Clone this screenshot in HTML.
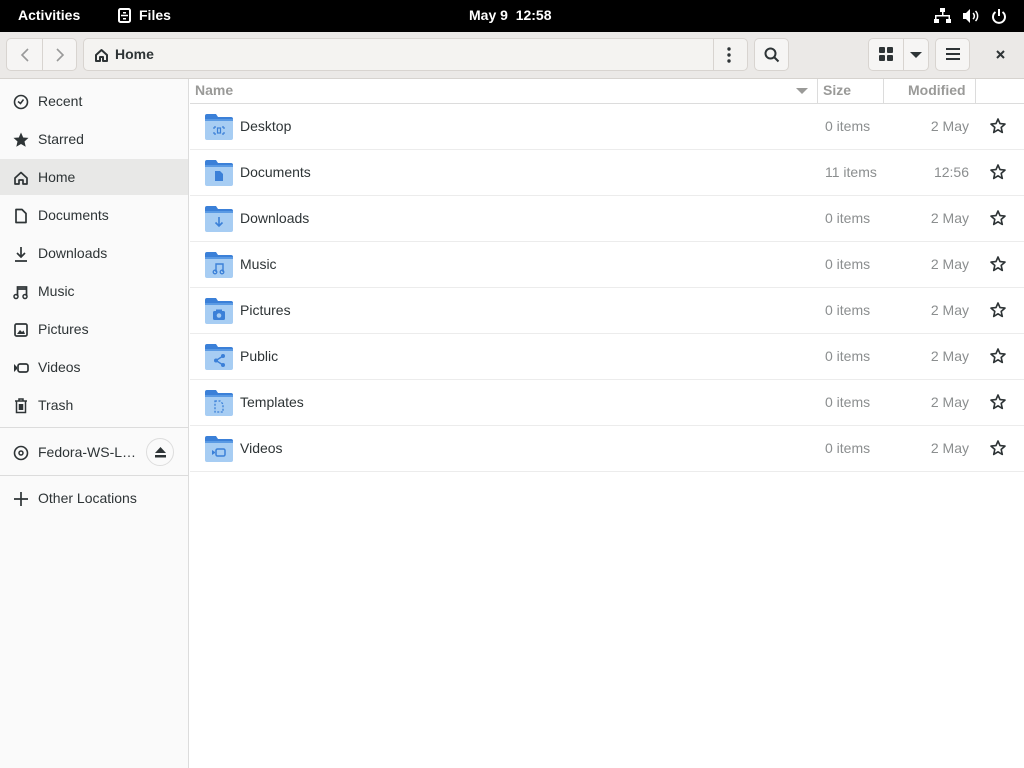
<!DOCTYPE html>
<html><head><meta charset="utf-8"><style>
*{margin:0;padding:0;box-sizing:border-box}
body{width:1024px;height:768px;overflow:hidden;font-family:"Liberation Sans","DejaVu Sans",sans-serif;background:#fff;position:relative;color:#2e3436}
.abs{position:absolute}
#top{left:0;top:0;width:1024px;height:32px;background:#000;color:#fff;font-size:14px;font-weight:bold}
#hb{left:0;top:32px;width:1024px;height:47px;background:#ebe9e7;border-bottom:1px solid #d6d3cf}
.btn{position:absolute;top:6px;height:33px;background:#f6f5f4;border:1px solid #d8d4d0;border-radius:5px}
#side{left:0;top:79px;width:189px;height:689px;background:#fafafa;border-right:1px solid #dcdcdc}
.si{position:absolute;left:0;width:188px;height:36px;font-size:14px;color:#2e3436}
.si span{position:absolute;left:38px;top:10px}
.si svg{position:absolute;left:13px;top:11px}
.hdr{font-size:14px;font-weight:bold;color:#9a9a98}
.row{position:absolute;left:190px;width:834px;height:46px;border-bottom:1px solid #ececec;font-size:14px}
.row .n{position:absolute;left:50px;top:14px;color:#2e3436}
.row .s{position:absolute;left:635px;top:14px;color:#8b8e8f}
.row .m{position:absolute;right:55px;top:14px;color:#8b8e8f}
.row .st{position:absolute;left:800px;top:14px}
.row .f{position:absolute;left:15px;top:10px}
</style></head><body>
<div id="top" class="abs">
<div class="abs" style="left:18px;top:7px">Activities</div>
<svg class="abs" style="left:118px;top:8px" width="13" height="15"><rect x="1" y="1" width="11" height="13" rx="1.5" fill="none" stroke="#fff" stroke-width="2"/><line x1="3" y1="7.5" x2="10" y2="7.5" stroke="#fff" stroke-width="1.5"/><rect x="5" y="4" width="3" height="1.5" fill="#fff"/><rect x="5" y="10" width="3" height="1.5" fill="#fff"/></svg>
<div class="abs" style="left:139px;top:7px">Files</div>
<div class="abs" style="left:469px;top:7px">May 9&nbsp; 12:58</div>
<svg class="abs" style="left:934px;top:8px" width="18" height="16" fill="#fff"><rect x="6" y="0" width="5" height="4"/><rect x="8" y="4" width="1.5" height="4"/><rect x="1" y="7" width="15" height="1.5"/><rect x="1" y="7" width="1.5" height="4"/><rect x="14.5" y="7" width="1.5" height="4"/><rect x="0" y="11" width="5" height="4"/><rect x="12" y="11" width="5" height="4"/></svg>
<svg class="abs" style="left:962px;top:8px" width="18" height="16"><path d="M1 5h3l4-4v14l-4-4H1z" fill="#fff"/><path d="M11 5a4 4 0 0 1 0 6M13.5 3a7 7 0 0 1 0 10" stroke="#fff" stroke-width="1.5" fill="none"/></svg>
<svg class="abs" style="left:991px;top:8px" width="16" height="16"><path d="M4.5 4a6 6 0 1 0 7 0" stroke="#fff" stroke-width="2" fill="none"/><line x1="8" y1="1" x2="8" y2="8" stroke="#fff" stroke-width="2"/></svg>
</div>
<div id="hb" class="abs">
<div class="btn" style="left:6px;width:71px"><div class="abs" style="left:35px;top:0;width:1px;height:31px;background:#d8d4d0"></div>
<svg class="abs" style="left:12px;top:8px" width="12" height="16"><path d="M9 2L3 8l6 6" stroke="#999" stroke-width="1.6" fill="none"/></svg>
<svg class="abs" style="left:47px;top:8px" width="12" height="16"><path d="M3 2l6 6-6 6" stroke="#999" stroke-width="1.6" fill="none"/></svg></div>
<div class="btn" style="left:83px;width:665px;background:#f4f3f1"><div class="abs" style="left:629px;top:0;width:1px;height:31px;background:#d8d4d0"></div>
<svg class="abs" style="left:10px;top:9px" width="15" height="14"><path d="M2 7L7.5 2 13 7v6H9v-4H6v4H2z" fill="none" stroke="#2e3436" stroke-width="2" stroke-linejoin="round"/></svg>
<div class="abs" style="left:31px;top:7px;font-size:14px;font-weight:bold">Home</div>
<svg class="abs" style="left:643px;top:8px" width="4" height="16" fill="#2e3436"><circle cx="2" cy="2" r="1.7"/><circle cx="2" cy="8" r="1.7"/><circle cx="2" cy="14" r="1.7"/></svg></div>
<div class="btn" style="left:754px;width:35px"><svg class="abs" style="left:9px;top:8px" width="16" height="16"><circle cx="6.5" cy="6.5" r="5" fill="none" stroke="#2e3436" stroke-width="2"/><path d="M10 10l4.5 4.5" stroke="#2e3436" stroke-width="2"/></svg></div>
<div class="btn" style="left:868px;width:61px"><div class="abs" style="left:34px;top:0;width:1px;height:31px;background:#d8d4d0"></div>
<svg class="abs" style="left:10px;top:8px" width="14" height="14" fill="#2e3436"><rect x="0" y="0" width="6" height="6" rx="1"/><rect x="8" y="0" width="6" height="6" rx="1"/><rect x="0" y="8" width="6" height="6" rx="1"/><rect x="8" y="8" width="6" height="6" rx="1"/></svg>
<svg class="abs" style="left:40px;top:12px" width="14" height="8"><path d="M1 1h12L7 7z" fill="#2e3436"/></svg></div>
<div class="btn" style="left:935px;width:35px"><svg class="abs" style="left:10px;top:9px" width="14" height="13" fill="#2e3436"><rect y="0" width="14" height="2"/><rect y="5" width="14" height="2"/><rect y="10" width="14" height="2"/></svg></div>
<svg class="abs" style="left:996px;top:18px" width="9" height="9"><path d="M1 1l7 7M8 1l-7 7" stroke="#2e3436" stroke-width="2"/></svg>
</div>
<div id="side" class="abs">
<div class="si" style="top:4px"><svg width="16" height="16"><circle cx="8" cy="8" r="6.5" fill="none" stroke="#2e3436" stroke-width="1.6"/><path d="M5 7.5l2.5 2 3-4" stroke="#2e3436" stroke-width="1.5" fill="none"/></svg><span>Recent</span></div>
<div class="si" style="top:42px"><svg width="16" height="16"><path d="M8 .5l2.2 5 5.3.4-4 3.6 1.2 5.3L8 12l-4.7 2.8 1.2-5.3-4-3.6 5.3-.4z" fill="#2e3436"/></svg><span>Starred</span></div>
<div class="si" style="top:80px;background:#e8e8e7"><svg width="16" height="16"><path d="M2 8L8 2.5 14 8v6h-4v-4H6v4H2z" fill="none" stroke="#2e3436" stroke-width="1.7" stroke-linejoin="round"/></svg><span>Home</span></div>
<div class="si" style="top:118px"><svg width="16" height="16"><path d="M3 1.5h6l4 4v9H3z" fill="none" stroke="#2e3436" stroke-width="1.7" stroke-linejoin="round"/></svg><span>Documents</span></div>
<div class="si" style="top:156px"><svg width="16" height="16"><path d="M8 1v10M4 7l4 4 4-4M2 15h12" stroke="#2e3436" stroke-width="1.7" fill="none"/></svg><span>Downloads</span></div>
<div class="si" style="top:194px"><svg width="16" height="16"><path d="M4.5 12V3h9v9M4.5 5h9" stroke="#2e3436" stroke-width="1.7" fill="none"/><circle cx="3" cy="12.5" r="2" fill="none" stroke="#2e3436" stroke-width="1.5"/><circle cx="12" cy="12.5" r="2" fill="none" stroke="#2e3436" stroke-width="1.5"/></svg><span>Music</span></div>
<div class="si" style="top:232px"><svg width="16" height="16"><rect x="2" y="2" width="12" height="12" rx="1.5" fill="none" stroke="#2e3436" stroke-width="1.7"/><path d="M4 12l3-4 2 2 1.5-1.5L12 12z" fill="#2e3436"/></svg><span>Pictures</span></div>
<div class="si" style="top:270px"><svg width="16" height="16"><path d="M1 4l3 3v2l-3 3z" fill="#2e3436"/><rect x="5" y="4" width="10" height="8" rx="2" fill="none" stroke="#2e3436" stroke-width="1.7"/></svg><span>Videos</span></div>
<div class="si" style="top:308px"><svg width="16" height="16"><path d="M2 3h12M6 3V1h4v2M3.5 3.5v11h9v-11M6.5 6v6M9.5 6v6M8 6v6" stroke="#2e3436" stroke-width="1.5" fill="none"/></svg><span>Trash</span></div>
<div class="abs" style="left:0;top:348px;width:188px;height:1px;background:#dcdcdc"></div>
<div class="si" style="top:355px"><svg width="16" height="16"><circle cx="8" cy="8" r="6.5" fill="none" stroke="#2e3436" stroke-width="1.6"/><circle cx="8" cy="8" r="2" fill="none" stroke="#2e3436" stroke-width="1.5"/></svg><span>Fedora-WS-L…</span>
<div class="abs" style="left:146px;top:4px;width:28px;height:28px;border-radius:50%;border:1px solid #ddd;background:#fafafa"><svg class="abs" style="left:7px;top:7px" width="13" height="13" fill="#2e3436"><path d="M6.5 1L12 7H1z"/><rect x="1" y="9" width="11" height="2.5"/></svg></div></div>
<div class="abs" style="left:0;top:396px;width:188px;height:1px;background:#dcdcdc"></div>
<div class="si" style="top:401px"><svg width="16" height="16"><path d="M8 1v14M1 8h14" stroke="#2e3436" stroke-width="1.7"/></svg><span>Other Locations</span></div>
</div>
<div class="abs" style="left:190px;top:79px;width:834px;height:25px;border-bottom:1px solid #dcdcdc">
<div class="abs hdr" style="left:5px;top:3px">Name</div>
<svg class="abs" style="left:606px;top:9px" width="12" height="7"><path d="M0 0h12L6 6z" fill="#9a9a98"/></svg>
<div class="abs" style="left:627px;top:0;width:1px;height:24px;background:#dcdcdc"></div>
<div class="abs hdr" style="left:633px;top:3px">Size</div>
<div class="abs" style="left:693px;top:0;width:1px;height:24px;background:#dcdcdc"></div>
<div class="abs hdr" style="left:718px;top:3px">Modified</div>
<div class="abs" style="left:785px;top:0;width:1px;height:24px;background:#dcdcdc"></div>
</div>
<svg width="0" height="0" style="position:absolute"><defs><g id="fold"><path d="M0 2a2 2 0 0 1 2-2h9l2 3h13a2 2 0 0 1 2 2v4H0z" fill="#3b80d8"/><rect x="0" y="5" width="28" height="21" rx="2" fill="#a7cdf3"/><rect x="0" y="5" width="28" height="2" fill="#5a9ae4"/></g>
<g id="star"><path d="M8 1l2 4.6 5 .5-3.8 3.3 1.1 5L8 11.8 3.7 14.4l1.1-5L1 6.1l5-.5z" fill="none" stroke="#2e3436" stroke-width="1.6" stroke-linejoin="round"/></g></defs></svg>
<div class="row" style="top:104px"><svg class="f" width="28" height="26"><use href="#fold"/><path d="M9 13h2M17 13h2M9 20h2M17 20h2M9 13v2M9 18v2M19 13v2M19 18v2" stroke="#3b80d8" stroke-width="1.2"/><rect x="12.5" y="14" width="3" height="5" fill="none" stroke="#3b80d8" stroke-width="1.2"/></svg><span class="n">Desktop</span><span class="s">0 items</span><span class="m">2 May</span><svg class="st" width="16" height="16"><use href="#star"/></svg></div>
<div class="row" style="top:150px"><svg class="f" width="28" height="26"><use href="#fold"/><path d="M10 11h5l3 3v7h-8z" fill="#3b80d8"/></svg><span class="n">Documents</span><span class="s">11 items</span><span class="m">12:56</span><svg class="st" width="16" height="16"><use href="#star"/></svg></div>
<div class="row" style="top:196px"><svg class="f" width="28" height="26"><use href="#fold"/><path d="M14 11v9M10.5 16.5l3.5 3.5 3.5-3.5" stroke="#3b80d8" stroke-width="1.6" fill="none"/></svg><span class="n">Downloads</span><span class="s">0 items</span><span class="m">2 May</span><svg class="st" width="16" height="16"><use href="#star"/></svg></div>
<div class="row" style="top:242px"><svg class="f" width="28" height="26"><use href="#fold"/><path d="M11 20v-8h7v8" stroke="#3b80d8" stroke-width="1.4" fill="none"/><circle cx="10" cy="20" r="1.8" fill="none" stroke="#3b80d8" stroke-width="1.3"/><circle cx="17" cy="20" r="1.8" fill="none" stroke="#3b80d8" stroke-width="1.3"/></svg><span class="n">Music</span><span class="s">0 items</span><span class="m">2 May</span><svg class="st" width="16" height="16"><use href="#star"/></svg></div>
<div class="row" style="top:288px"><svg class="f" width="28" height="26"><use href="#fold"/><rect x="8" y="13" width="12" height="9" rx="1.5" fill="#3b80d8"/><rect x="11" y="11.5" width="6" height="2" fill="#3b80d8"/><circle cx="14" cy="17.5" r="2.3" fill="#a7cdf3"/></svg><span class="n">Pictures</span><span class="s">0 items</span><span class="m">2 May</span><svg class="st" width="16" height="16"><use href="#star"/></svg></div>
<div class="row" style="top:334px"><svg class="f" width="28" height="26"><use href="#fold"/><path d="M18 12l-7 4.5 7 4.5" stroke="#3b80d8" stroke-width="1.4" fill="none"/><circle cx="18" cy="12" r="2" fill="#3b80d8"/><circle cx="11" cy="16.5" r="2" fill="#3b80d8"/><circle cx="18" cy="21" r="2" fill="#3b80d8"/></svg><span class="n">Public</span><span class="s">0 items</span><span class="m">2 May</span><svg class="st" width="16" height="16"><use href="#star"/></svg></div>
<div class="row" style="top:380px"><svg class="f" width="28" height="26"><use href="#fold"/><path d="M10 11h5l3 3v8h-8z" fill="none" stroke="#3b80d8" stroke-width="1.3" stroke-dasharray="2 1.5"/></svg><span class="n">Templates</span><span class="s">0 items</span><span class="m">2 May</span><svg class="st" width="16" height="16"><use href="#star"/></svg></div>
<div class="row" style="top:426px"><svg class="f" width="28" height="26"><use href="#fold"/><path d="M7 14l3 2v1l-3 2z" fill="#3b80d8"/><rect x="11" y="13" width="9" height="7" rx="1.5" fill="none" stroke="#3b80d8" stroke-width="1.5"/></svg><span class="n">Videos</span><span class="s">0 items</span><span class="m">2 May</span><svg class="st" width="16" height="16"><use href="#star"/></svg></div>
</body></html>
